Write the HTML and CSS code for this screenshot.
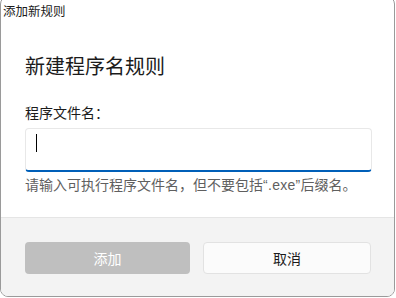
FILE: index.html
```html
<!DOCTYPE html>
<html lang="zh-CN">
<head>
<meta charset="utf-8">
<title>添加新规则</title>
<link rel="stylesheet" href="styles.css">
</head>
<body>
<div class="window">
  <div class="titlebar">添加新规则</div>
  <div class="content">
    <h1 class="heading">新建程序名规则</h1>
    <div class="label">程序文件名：</div>
    <div class="input"><span class="caret"></span></div>
    <div class="help">请输入可执行程序文件名，但不要包括<span class="latin">“.exe”</span>后缀名。</div>
  </div>
  <div class="footer">
    <button class="btn btn-primary" disabled>添加</button>
    <button class="btn btn-secondary">取消</button>
  </div>
</div>
</body>
</html>
```
FILE: styles.css
```css
html, body {
  margin: 0;
  padding: 0;
  background: #ffffff;
  overflow: hidden;
}
body {
  width: 396px;
  height: 298px;
  font-family: "Noto Sans CJK SC", "Noto Sans", sans-serif;
  color: #1b1b1b;
}
.window {
  box-sizing: border-box;
  width: 395px;
  height: 301px;
  margin-top: -4px;
  border: 1px solid #9a9a9a;
  border-radius: 8px;
  background: #ffffff;
  display: flex;
  flex-direction: column;
  overflow: hidden;
}
.titlebar {
  padding: 4px 0 0 2px;
  font-size: 12.5px;
  line-height: 20px;
  height: 20px;
  color: #1b1b1b;
}
.content {
  padding: 31px 22px 22px 24px;
  display: flex;
  flex-direction: column;
}
.heading {
  margin: 0;
  font-size: 20px;
  font-weight: normal;
  line-height: 28px;
  color: #1b1b1b;
}
.label {
  margin-top: 22px;
  font-size: 14px;
  line-height: 20px;
}
.input {
  box-sizing: border-box;
  margin-top: 6px;
  height: 44px;
  border: 1px solid #e8e8e8;
  border-bottom: 2px solid #005fb8;
  border-radius: 4px;
  background: #ffffff;
  padding: 5px 0 0 10px;
}
.caret {
  display: block;
  width: 1px;
  height: 18px;
  background: #000000;
}
.help {
  margin-top: 2px;
  font-size: 14px;
  line-height: 20px;
  color: #5f5f5f;
  white-space: nowrap;
}
.latin {
  font-family: "Liberation Sans", sans-serif;
  letter-spacing: 0.3px;
}
.footer {
  flex: 1;
  background: #f3f3f3;
  border-top: 1px solid #e5e5e5;
  padding: 24px 0 0 24px;
  display: grid;
  grid-template-columns: 165px 168px;
  column-gap: 13px;
  align-content: start;
}
.btn {
  height: 32px;
  border-radius: 4px;
  font-family: "Noto Sans CJK SC", "Noto Sans", sans-serif;
  font-size: 14px;
  padding: 0;
}
.btn-primary {
  background: #bfbfbf;
  color: #ffffff;
  border: none;
}
.btn-secondary {
  background: #fbfbfb;
  color: #1b1b1b;
  border: 1px solid #e2e2e2;
}
```
